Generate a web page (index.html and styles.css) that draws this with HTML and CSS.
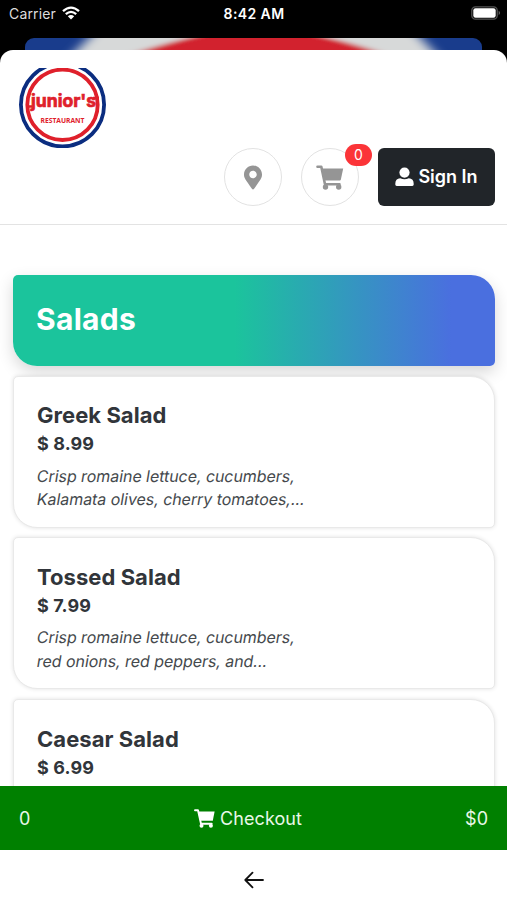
FILE: index.html
```html
<!DOCTYPE html>
<html lang="en">
<head>
<meta charset="utf-8">
<title>Junior's Restaurant</title>
<link rel="stylesheet" href="styles.css">
</head>
<body>
<div class="phone">
  <div class="status">
    <div class="carrier">Carrier
      <svg class="wifi" viewBox="0 0 18 14"><g fill="none" stroke="#fff" stroke-width="2.3"><path d="M1 5.2Q9-2 17 5.2"/><path d="M3.8 8.2Q9 3.6 14.2 8.2"/></g><path fill="#fff" d="M5.8 10.2Q9 7.6 12.2 10.2L9 13.6z"/></svg>
    </div>
    <div class="time">8:42 AM</div>
    <svg class="battery" viewBox="0 0 30 14"><rect x=".8" y=".8" width="25.4" height="12.4" rx="3.6" fill="none" stroke="#555" stroke-width="1.3"/><rect x="2.3" y="2.3" width="22.4" height="9.4" rx="2.2" fill="#fff"/><path d="M27.7 4.8q2.7 2.2 0 4.4z" fill="#666"/></svg>
  </div>
  <svg class="behind" viewBox="0 0 457 12">
    <defs><filter id="soft" x="-10%" y="-100%" width="120%" height="300%"><feGaussianBlur stdDeviation="7 1.5"/></filter></defs>
    <rect width="457" height="12" fill="#193c8c"/>
    <g filter="url(#soft)">
      <path d="M46 18L70-6H390L413 18z" fill="#d7d9d9"/>
      <path d="M100 18Q150 2 190-6H275Q320 2 365 18z" fill="#d2232d"/>
    </g>
  </svg>
  <div class="sheet">
    <header>
      <svg class="logo" viewBox="0 0 88 80">
        <circle cx="44.5" cy="36.8" r="41.6" fill="none" stroke="#0b2d80" stroke-width="3.8"/>
        <circle cx="44.5" cy="36.8" r="35.2" fill="none" stroke="#df202b" stroke-width="3.8"/>
        <path d="M9 38.5H14M75 30H81" stroke="#df202b" stroke-width="2.6"/>
        <text class="brand" x="13" y="38.5" textLength="65" lengthAdjust="spacingAndGlyphs">junior's</text>
        <text class="sub" x="22.5" y="54.5" textLength="44" lengthAdjust="spacingAndGlyphs">RESTAURANT</text>
      </svg>
      <div class="actions">
        <div class="round"><svg class="pin" viewBox="0 0 384 512"><path d="M172.268 501.67C26.97 291.031 0 269.413 0 192 0 85.961 85.961 0 192 0s192 85.961 192 192c0 77.413-26.97 99.031-172.268 309.67-9.535 13.774-29.93 13.773-39.464 0zM192 272c44.183 0 80-35.817 80-80s-35.817-80-80-80-80 35.817-80 80 35.817 80 80 80z"/></svg></div>
        <div class="round"><svg class="cart" viewBox="0 0 28 25"><path d="M1.5 1.8H5.3L9 19.3H23.5" fill="none" stroke="#959595" stroke-width="2.6" stroke-linejoin="round" stroke-linecap="round"/><path d="M5 3.6H27.2L24.8 14.8Q24.6 15.6 23.8 15.6H8z"/><circle cx="9.5" cy="22" r="2.7"/><circle cx="22.7" cy="22" r="2.7"/></svg><span class="badge">0</span></div>
        <div class="signin"><svg viewBox="0 0 19 20"><circle cx="9.5" cy="5.6" r="5.1"/><path d="M.3 17.6V16.7Q.3 11.6 5.2 11.3Q9.5 13.3 13.8 11.3Q18.7 11.6 18.7 16.7V17.6Q18.7 19 17.3 19H1.7Q.3 19 .3 17.6z"/></svg><span>Sign In</span></div>
      </div>
    </header>
    <main>
      <div class="category">Salads</div>
      <article><h2>Greek Salad</h2><h3>$ 8.99</h3><p><span>Crisp romaine lettuce, cucumbers,</span><span>Kalamata olives, cherry tomatoes,...</span></p></article>
      <article><h2>Tossed Salad</h2><h3>$ 7.99</h3><p><span>Crisp romaine lettuce, cucumbers,</span><span>red onions, red peppers, and...</span></p></article>
      <article><h2>Caesar Salad</h2><h3>$ 6.99</h3></article>
    </main>
    <div class="checkout"><span>0</span><span class="label"><svg viewBox="0 0 21 19"><path d="M1 1.3H4L7 14.8H17.7" fill="none" stroke="#fff" stroke-width="1.9" stroke-linejoin="round" stroke-linecap="round"/><path d="M4 2.5H20.6L18.8 11.8H6z"/><circle cx="7.5" cy="16.8" r="2"/><circle cx="16.9" cy="16.8" r="2"/></svg>Checkout</span><span class="total">$0</span></div>
    <nav><svg viewBox="0 0 20 18"><path d="M19 9H1.5M8.5 1.7L1.3 9l7.2 7.3" fill="none" stroke="#111" stroke-width="1.8" stroke-linecap="round" stroke-linejoin="round"/></svg></nav>
  </div>
</div>
</body>
</html>
```
FILE: styles.css
```css
* { box-sizing: border-box; }
body { margin: 0; background: #000; font-family: Inter, "Liberation Sans", sans-serif; color: #31353a; }
.phone { width: 507px; height: 900px; overflow: hidden; display: flex; flex-direction: column; background: #000; }
.status { height: 38px; flex: none; display: grid; grid-template-columns: 1fr auto 1fr; padding: 5px 6px 0 9px; align-items: start; color: #fff; font-size: 14px; line-height: 18px; }
.carrier { display: flex; gap: 6px; color: #ddd; letter-spacing: .15px; }
.wifi { width: 18px; height: 14px; margin-top: 1px; }
.time { font-weight: 600; letter-spacing: .4px; margin-right: 2px; }
.battery { width: 30px; height: 14px; justify-self: end; margin-top: 1px; }
.behind { display: block; width: 457px; height: 12px; flex: none; margin: 0 25px; border-radius: 9px 9px 0 0; overflow: hidden; }
.sheet { flex: 1; min-height: 0; background: #fff; border-radius: 13px 13px 0 0; display: flex; flex-direction: column; overflow: hidden; }
header { height: 175px; flex: none; padding: 18px 12px 0 18px; border-bottom: 1px solid #e3e3e3; }
.logo { display: block; width: 88px; height: 80px; }
.brand { font: 700 18px Inter, sans-serif; fill: #df202b; stroke: #df202b; stroke-width: .7px; }
.sub { font: 700 7px "Open Sans", sans-serif; fill: #df202b; }
.actions { display: flex; justify-content: flex-end; gap: 19px; }
.round { position: relative; width: 58px; height: 58px; border: 1px solid #e2e2e2; border-radius: 50%; display: flex; align-items: center; justify-content: center; fill: #959595; }
.pin { width: 18px; height: 25px; }
.cart { width: 28px; height: 25px; }
.badge { position: absolute; left: 43px; top: -5px; width: 27px; height: 22px; border-radius: 11px; background: #fb3438; color: #fff; font-size: 14px; line-height: 22px; text-align: center; }
.signin { width: 117px; height: 58px; border-radius: 6px; background: #212529; color: #fff; fill: #fff; display: flex; align-items: center; justify-content: center; gap: 4px; font-size: 18px; font-weight: 600; line-height: 22px; }
.signin svg { width: 19px; height: 20px; }
main { flex: 1; min-height: 0; overflow: hidden; padding: 50px 12.5px 0 13px; }
.category { height: 91px; border-radius: 5px 24px 5px 24px; background: linear-gradient(90deg, #1bc49c 0 46%, #4a6fdf 91%); box-shadow: 0 6px 16px rgba(0,0,0,.16); color: #fff; font-size: 30px; font-weight: 700; letter-spacing: .3px; line-height: 88px; padding-left: 23px; margin-bottom: 9.5px; }
article { position: relative; height: 152px; margin-bottom: 9.8px; border: 1px solid #e9e9e9; border-radius: 5px 24px 5px 24px; background: #fff; box-shadow: 0 0 4px rgba(0,0,0,.12); padding: 24.5px 23px; }
h2 { margin: 0 0 1px; font-size: 22px; line-height: 28px; font-weight: 700; letter-spacing: .05px; }
h3 { margin: 0 0 6.5px; font-size: 18px; line-height: 28px; font-weight: 700; letter-spacing: .1px; }
p { margin: 0; font-size: 16px; line-height: 23.3px; letter-spacing: -.06px; white-space: nowrap; color: #45494d; }
p span { display: block; transform: skewX(-9.4deg); }
.checkout { height: 64px; flex: none; background: #008000; color: #e8f8e8; display: grid; grid-template-columns: 1fr auto 1fr; align-items: center; padding: 0 19px; font-size: 18px; }
.label { display: flex; align-items: center; gap: 5px; margin-right: 11px; letter-spacing: .1px; }
.label svg { width: 21px; height: 19px; fill: #fff; }
.total { text-align: right; }
nav { height: 50px; flex: none; display: flex; justify-content: center; padding-top: 21px; }
nav svg { width: 20px; height: 18px; }
```
